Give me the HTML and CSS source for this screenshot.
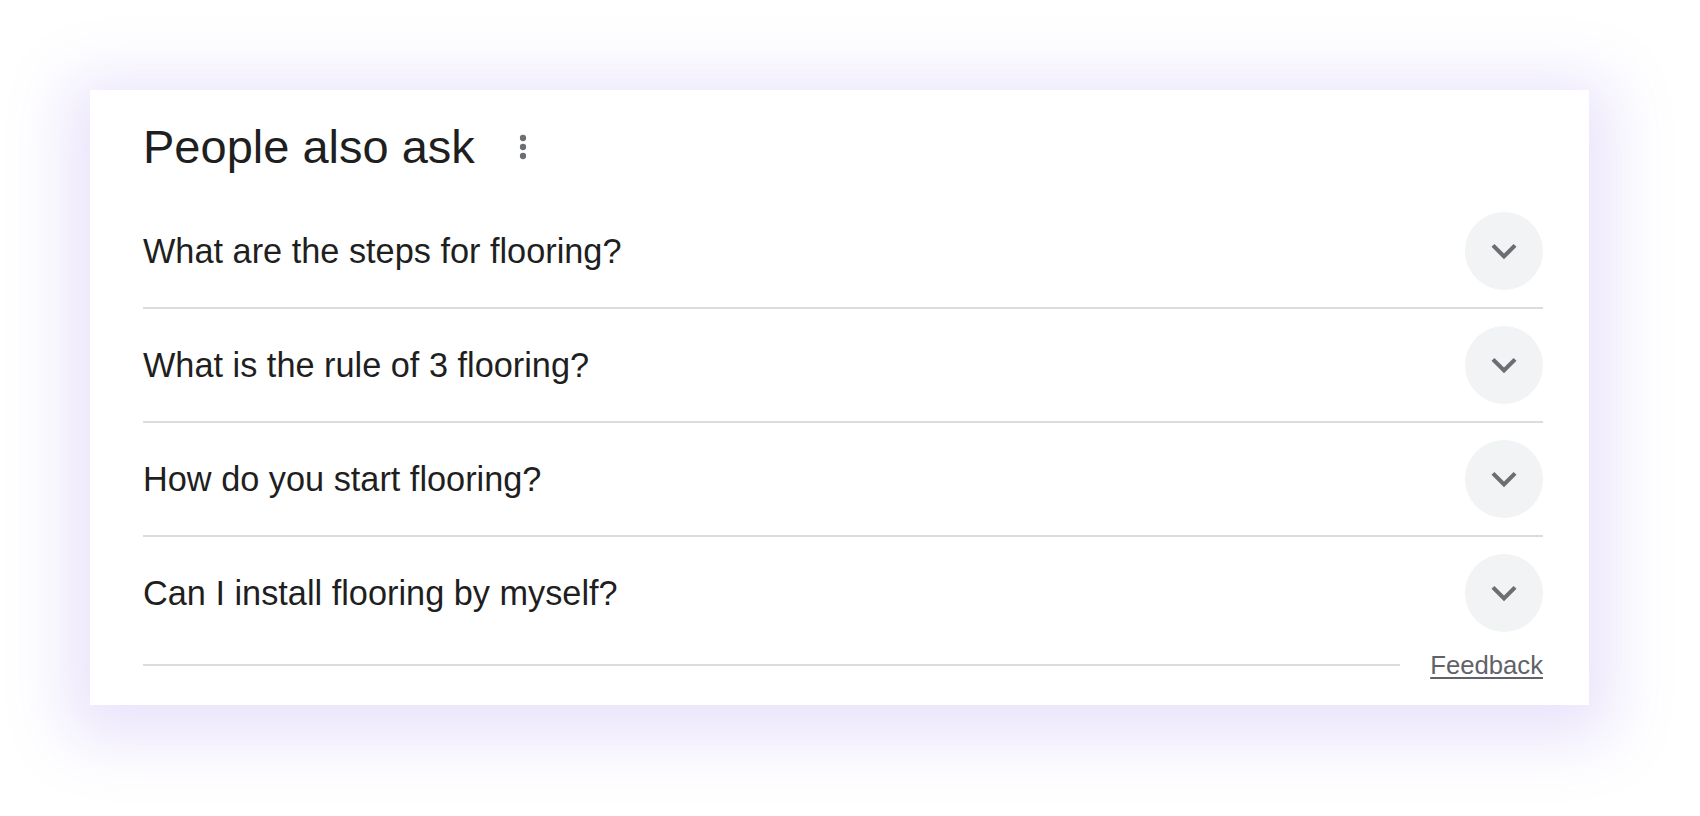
FILE: index.html
```html
<!DOCTYPE html>
<html lang="en">
<head>
<meta charset="utf-8">
<title>People also ask</title>
<link rel="stylesheet" href="styles.css">
</head>
<body>
<section class="card">
  <header class="head">
    <h2 class="title">People also ask</h2>
    <span class="kebab" aria-label="More options">
      <svg viewBox="0 0 24 24" width="36" height="36"><circle cx="12" cy="6" r="2.1"/><circle cx="12" cy="12" r="2.1"/><circle cx="12" cy="18" r="2.1"/></svg>
    </span>
  </header>
  <div class="list">
    <div class="row">
      <span class="q">What are the steps for flooring?</span>
      <span class="toggle"><svg viewBox="0 0 24 24" width="50" height="50"><path d="M7.41 8.59L12 13.17l4.59-4.58L18 10l-6 6-6-6 1.41-1.41z"/></svg></span>
    </div>
    <div class="row">
      <span class="q">What is the rule of 3 flooring?</span>
      <span class="toggle"><svg viewBox="0 0 24 24" width="50" height="50"><path d="M7.41 8.59L12 13.17l4.59-4.58L18 10l-6 6-6-6 1.41-1.41z"/></svg></span>
    </div>
    <div class="row">
      <span class="q">How do you start flooring?</span>
      <span class="toggle"><svg viewBox="0 0 24 24" width="50" height="50"><path d="M7.41 8.59L12 13.17l4.59-4.58L18 10l-6 6-6-6 1.41-1.41z"/></svg></span>
    </div>
    <div class="row last">
      <span class="q">Can I install flooring by myself?</span>
      <span class="toggle"><svg viewBox="0 0 24 24" width="50" height="50"><path d="M7.41 8.59L12 13.17l4.59-4.58L18 10l-6 6-6-6 1.41-1.41z"/></svg></span>
    </div>
  </div>
  <footer class="foot">
    <span class="rule"></span>
    <a class="feedback" href="#">Feedback</a>
  </footer>
</section>
</body>
</html>
```
FILE: styles.css
```css
html, body {
  margin: 0;
  padding: 0;
  background: #ffffff;
}

body {
  width: 1700px;
  height: 816px;
  overflow: hidden;
  font-family: "Liberation Sans", Arial, sans-serif;
  color: #202124;
}

.card {
  box-sizing: border-box;
  width: 1499px;
  height: 615px;
  margin: 90px 0 0 90px;
  padding: 27px 46px 24px 53px;
  background: #ffffff;
  box-shadow: 0 12px 60px 22px rgba(136, 108, 236, 0.19);
  display: flex;
  flex-direction: column;
}

.head {
  display: flex;
  align-items: center;
  height: 60px;
  margin-bottom: 18px;
}

.title {
  margin: 0;
  font-size: 47px;
  font-weight: 400;
  line-height: 60px;
  color: #1f1f1f;
}

.kebab {
  display: flex;
  margin-left: 30px;
  fill: #6b6f73;
}

.list {
  display: flex;
  flex-direction: column;
}

.row {
  display: flex;
  align-items: center;
  justify-content: space-between;
  height: 112px;
  border-bottom: 2px solid #dadce0;
}

.row.last {
  border-bottom: none;
}

.q {
  font-size: 34.3px;
  line-height: 40px;
  color: #1f1f1f;
}

.toggle {
  width: 78px;
  height: 78px;
  border-radius: 50%;
  background: #f1f3f4;
  display: flex;
  align-items: center;
  justify-content: center;
  fill: #6b6f73;
}

.foot {
  display: flex;
  align-items: center;
  height: 32px;
  gap: 30px;
}

.rule {
  flex: 1;
  height: 2px;
  background: #dadce0;
}

.feedback {
  font-size: 25.7px;
  line-height: 30px;
  color: #5f6368;
  text-decoration: underline;
  text-decoration-thickness: 2px;
  text-underline-offset: 3px;
}
```
